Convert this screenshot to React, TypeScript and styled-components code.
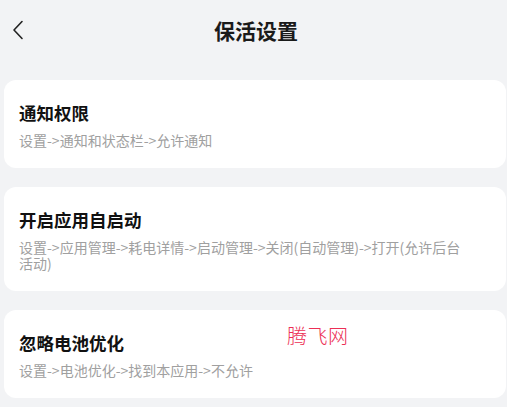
import styled, { createGlobalStyle } from 'styled-components';

const GlobalStyle = createGlobalStyle`
  html, body {
    margin: 0;
    padding: 0;
    background-color: #f2f3f5;
    font-family: "Noto Sans CJK SC", "Noto Sans", sans-serif;
  }
`

const Page = styled.div`
  display: flex;
  flex-direction: column;
  width: 507px;
  min-height: 407px;
  background-color: #f2f3f5;
  overflow: hidden;
`

const Header = styled.header`
  position: relative;
  display: flex;
  align-items: center;
  justify-content: center;
  height: 60px;
`

const BackButton = styled.button`
  position: absolute;
  left: 8px;
  top: 18px;
  width: 20px;
  height: 24px;
  padding: 0;
  border: none;
  background: none;
  display: flex;
  align-items: center;
  justify-content: center;
  color: #222;
`

const Title = styled.h1`
  margin: 0 0 0 5px;
  font-size: 21px;
  line-height: 28px;
  font-weight: 700;
  color: #1a1a1a;
`

const List = styled.main`
  display: flex;
  flex-direction: column;
  gap: 19px;
  padding: 20px 1px 0 4px;
`

const Card = styled.section`
  position: relative;
  background-color: #ffffff;
  border-radius: 12px;
  padding: 21px 40px 20px 15px;
`

const CardTitle = styled.h2`
  margin: 0;
  font-size: 17.5px;
  line-height: 24px;
  font-weight: 700;
  color: #111;
`

const CardPath = styled.p`
  margin: 7px 0 0;
  font-size: 14px;
  line-height: 16px;
  color: #a0a0a0;
`

const Watermark = styled.span`
  position: absolute;
  left: 283px;
  top: 13px;
  font-size: 20px;
  line-height: 26px;
  font-weight: 300;
  letter-spacing: 0.5px;
  color: #ec2f55;
`

const items = [
  { title: '通知权限', path: '设置->通知和状态栏->允许通知' },
  { title: '开启应用自启动', path: '设置->应用管理->耗电详情->启动管理->关闭(自动管理)->打开(允许后台活动)' },
  { title: '忽略电池优化', path: '设置->电池优化->找到本应用->不允许', mark: '腾飞网' },
]

export default function App() {
  return (
    <>
      <GlobalStyle />
      <Page>
        <Header>
          <BackButton aria-label="返回">
            <svg width="12" height="20" viewBox="0 0 12 20" fill="none">
              <path d="M10 1.5 L2 10 L10 18.5" stroke="currentColor" strokeWidth="1.6" strokeLinecap="round" strokeLinejoin="round" />
            </svg>
          </BackButton>
          <Title>保活设置</Title>
        </Header>
        <List>
          {items.map((item) => (
            <Card key={item.title}>
              <CardTitle>{item.title}</CardTitle>
              <CardPath>{item.path}</CardPath>
              {item.mark && <Watermark>{item.mark}</Watermark>}
            </Card>
          ))}
        </List>
      </Page>
    </>
  )
}
